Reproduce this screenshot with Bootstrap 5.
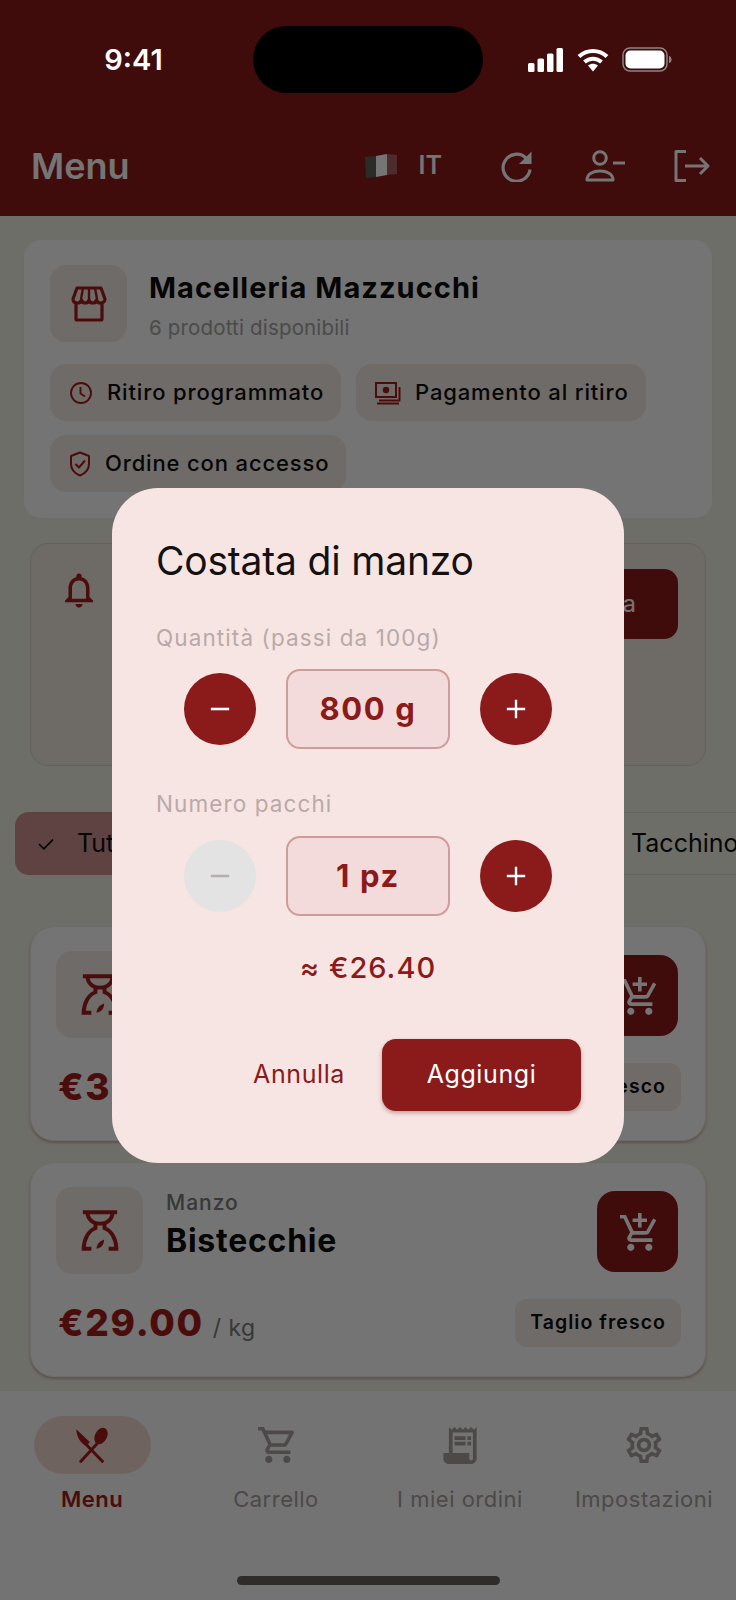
<!DOCTYPE html>
<html lang="it">
<head>
  <meta charset="UTF-8">
  <title>Menu - Macelleria Mazzucchi</title>
  <link href="https://cdn.jsdelivr.net/npm/bootstrap@5.3.0/dist/css/bootstrap.min.css" rel="stylesheet">
  <style>
    body { margin: 0; background: #000; font-family: "Inter", "Liberation Sans", sans-serif; }
    .screen { position: relative; width: 736px; height: 1600px; overflow: hidden; background: #f0efe4; color: #0d0d0d; }
    .scrim { position: absolute; inset: 0; background: rgba(0,0,0,.54); z-index: 10; }
    .accent-ink { color: #a31c1c; }

    /* top bar */
    .topbar { height: 216px; background: #8b1a1a; color: #fff; }
    .statusbar { position: relative; z-index: 11; height: 116px; padding-top: 26px; }
    .clock { width: 253px; padding-left: 14px; font-size: 29px; font-weight: 600; line-height: 67px; text-align: center; }
    .notch { width: 230px; height: 67px; background: #000; border-radius: 34px; }
    .status-icons { height: 67px; margin-left: 45px; gap: 13px; }
    .toolbar { height: 100px; padding: 0 26px 0 31px; }
    .toolbar-title { font-size: 36px; font-weight: 600; }
    .lang { font-size: 25px; font-weight: 600; gap: 22px; }
    .tool-1 { margin-left: 59px; }
    .tool-2 { margin-left: 52px; }
    .tool-3 { margin-left: 49px; }

    /* shop card */
    .panel { background: #fcfcfc; border: 1px solid #f0ece6; border-radius: 18px; }
    .shop-panel { height: 280px; margin: 23px 23px 0; padding: 25px 26px; }
    .tile { display: flex; align-items: center; justify-content: center; flex: none; background: #f1e9e2; border-radius: 16px; }
    .shop-tile { width: 77px; height: 77px; }
    .shop-text { margin-left: 22px; }
    .shop-name { font-size: 29px; font-weight: 700; line-height: 36px; margin-top: 5px; letter-spacing: 1.05px; }
    .shop-sub { font-size: 20.5px; line-height: 28px; margin-top: 8px; color: #a3a3a3; letter-spacing: .17px; }
    .info-chips { gap: 14px 15px; margin-top: 22px; }
    .info-chip { height: 57px; padding: 0 17px 0 19px; gap: 14px; background: #f1e9e2; border-radius: 16px; font-size: 22px; font-weight: 500; letter-spacing: .85px; color: #0d0d0d; }

    /* alert card */
    .alert-panel { height: 223px; margin: 24px 30px 0; padding: 25px 27px 0 27px; background: #f0e7df; border: 1px solid #ddd3cf; border-radius: 18px; }
    .alert-btn { width: 160px; height: 70px; background: #8b1a1a; border: 0; border-radius: 14px; color: #fff; font-size: 24px; text-align: right; padding-right: 42px; }

    /* filters */
    .filters { height: 63px; margin-top: 46px; padding-left: 15px; }
    .filter-chip { flex: none; height: 63px; gap: 22px; border-radius: 14px; font-size: 25px; color: #0d0d0d; }
    .filter-on { width: 300px; padding-left: 22px; background: #cf9292; }
    .filter-off { width: 170px; margin-left: 283px; padding-left: 32px; background: #f0efe4; border: 1px solid #e3d9d3; }

    /* products */
    .product { height: 215px; margin: 0 30px; padding: 24px 25px 0; border-radius: 24px; box-shadow: 0 2px 3px rgba(100,40,40,.3); }
    .product-1 { margin-top: 51px; }
    .product-2 { margin-top: 21px; }
    .product-tile { width: 87px; height: 87px; }
    .product-text { margin-left: 23px; flex: 1; }
    .product-cat { font-size: 21px; line-height: 28px; font-weight: 500; color: #7a7a7a; margin-top: 2px; letter-spacing: 1px; }
    .product-name { font-size: 32px; line-height: 40px; font-weight: 700; margin-top: 4px; letter-spacing: .75px; }
    .add-btn { display: flex; align-items: center; justify-content: center; width: 81px; height: 81px; margin: 4px 2px 0 0; padding: 0; background: #8b1a1a; border: 0; border-radius: 18px; color: #fff; }
    .price-row { margin: 25px -1px 0 2px; }
    .price { font-size: 37px; line-height: 48px; font-weight: 800; color: #a31c1c; letter-spacing: 1.7px; }
    .unit { font-size: 23px; color: #7a7a7a; margin-left: 9px; letter-spacing: .4px; }
    .tag { height: 48px; padding: 0 15px; background: #f1e9e2; border-radius: 12px; font-size: 19.5px; font-weight: 600; letter-spacing: 1.05px; }

    /* bottom nav */
    .tabbar { position: absolute; left: 0; right: 0; bottom: 0; height: 209px; background: #fafafa; padding-top: 25px; }
    .tab-item { width: 184px; color: #a89f9f; font-size: 22px; letter-spacing: .5px; }
    .tab-pill { display: flex; align-items: center; justify-content: center; width: 117px; height: 58px; border-radius: 29px; }
    .tab-on .tab-pill { background: #f1d7d1; color: #a31c1c; }
    .tab-on { color: #a31c1c; font-weight: 600; }
    .tab-label { margin-top: 11px; line-height: 28px; color: inherit; }
    .home-bar { position: absolute; left: 237px; bottom: 15px; width: 263px; height: 9px; border-radius: 5px; background: #66625c; }

    /* dialog */
    .qty-dialog { position: absolute; z-index: 11; left: 112px; top: 488px; width: 512px; height: 675px; padding: 45px 44px 0; background: #f7e5e3; border-radius: 46px; }
    .dialog-title { font-size: 39px; line-height: 56px; font-weight: 400; margin: 0; color: #151111; letter-spacing: -.2px; }
    .field-label { font-size: 22.5px; line-height: 28px; color: #b9a9a9; letter-spacing: 1.1px; }
    .label-1 { margin-top: 35px; }
    .label-2 { margin-top: 41px; }
    .stepper { padding-left: 28px; gap: 30px; }
    .stepper-1 { margin-top: 17px; }
    .stepper-2 { margin-top: 18px; }
    .step-btn { display: flex; align-items: center; justify-content: center; width: 72px; height: 72px; padding: 0; border: 0; border-radius: 50%; background: #8b1a1a; color: #fff; }
    .step-off { background: #e3e3e3; color: #b5aeae; }
    .step-value { display: flex; align-items: center; justify-content: center; width: 164px; height: 80px; background: #f3dbdb; border: 2px solid #cf9c9c; border-radius: 14px; font-size: 31px; font-weight: 700; color: #8b1a1a; letter-spacing: 1.6px; }
    .approx { margin-top: 34px; font-size: 29px; line-height: 36px; font-weight: 500; color: #8b1a1a; text-align: center; letter-spacing: 1px; }
    .dialog-actions { margin: 53px -1px 0 0; gap: 37px; }
    .cancel-link { padding: 0; border: 0; background: none; color: #8b1a1a; font-size: 25px; letter-spacing: .6px; }
    .confirm-btn { width: 199px; height: 72px; padding: 0; border: 0; border-radius: 14px; background: #8b1a1a; color: #fff; font-size: 25px; letter-spacing: .6px; box-shadow: 0 2px 4px rgba(90,20,20,.35); }
  </style>
</head>
<body>
<svg width="0" height="0" class="position-absolute">
  <defs>
    <symbol id="ic-refresh" viewBox="0 0 32 32"><path fill="none" stroke="currentColor" stroke-width="3.200" d="M25 8A13.500 13.500 0 1 0 29 19.500"/><path fill="currentColor" d="M30.500 1.500V14H18z"/></symbol>
    <symbol id="ic-user-minus" viewBox="0 0 40 32"><g fill="none" stroke="currentColor" stroke-width="3" stroke-linejoin="round"><circle cx="15" cy="8" r="6.300"/><path d="M2 30c0-6 6-9 13-9s13 3 13 9z"/></g><path fill="currentColor" d="M28 11.500h12v3H28z"/></symbol>
    <symbol id="ic-logout" viewBox="0 0 36 32"><g fill="none" stroke="currentColor" stroke-width="3" stroke-linejoin="round"><path d="M12 1.500H2v29h10"/><path d="M11 16h23M26 8l8 8-8 8"/></g></symbol>
    <symbol id="ic-store" viewBox="0 0 36 36"><g fill="none" stroke="currentColor" stroke-width="3.200" stroke-linejoin="round"><path d="M6 2h24l4 11c0 3-3 4-4.500 4-2 0-3.500-1-4-3-.5 2-2 3-3.800 3s-3.200-1-3.700-3c-.5 2-2 3-3.700 3s-3.300-1-3.800-3c-.5 2-2 3-4 3C4 17 2 16 2 13z"/><path d="M12 2l-2 11M24 2l2 11M18 2v11" stroke-width="2.400"/><path d="M5 17v16a1 1 0 0 0 1 1h24a1 1 0 0 0 1-1V17"/></g></symbol>
    <symbol id="ic-clock" viewBox="0 0 24 24"><g fill="none" stroke="currentColor" stroke-width="1.900"><circle cx="12" cy="12" r="10"/><path d="M11.500 6v6.500l4.500 3"/></g></symbol>
    <symbol id="ic-cash" viewBox="0 0 26 24"><g fill="none" stroke="currentColor" stroke-width="2"><rect x="1" y="2" width="20" height="14"/><path d="M24.500 6v13.500H4M2 22.500h22"/></g><circle cx="11" cy="9" r="3.200" fill="currentColor"/></symbol>
    <symbol id="ic-shield" viewBox="0 0 22 26"><g fill="none" stroke="currentColor" stroke-width="2" stroke-linejoin="round"><path d="M11 1.500l9 3.500v8c0 5.500-4 9.500-9 11.500-5-2-9-6-9-11.500V5z"/><path d="M6.500 13l3.500 3.500 6-7"/></g></symbol>
    <symbol id="ic-bell" viewBox="0 0 24 24"><path fill="currentColor" d="M12 22c1.100 0 2-.9 2-2h-4c0 1.100.9 2 2 2zm6-6v-5c0-3.070-1.630-5.640-4.500-6.320V4c0-.83-.67-1.500-1.500-1.500s-1.500.67-1.500 1.500v.68C7.640 5.360 6 7.920 6 11v5l-2 2v1h16v-1l-2-2zm-2 1H8v-6c0-2.480 1.510-4.500 4-4.500s4 2.020 4 4.500v6z"/></symbol>
    <symbol id="ic-check" viewBox="0 0 20 16"><path fill="none" stroke="currentColor" stroke-width="2" d="M2 8l5.500 5.500L18 3"/></symbol>
    <symbol id="ic-scale" viewBox="4 3 16 18"><g fill="none" stroke="currentColor" stroke-width="1.700"><path d="M4.500 4h15"/><path d="M6.500 4c0 3.200 2.500 5 5.500 5s5.500-1.800 5.500-5"/><path d="M10 9v2C7 12 5 15.500 4.800 20h3.400M14 9v2c3 1 5 4.500 5.200 9h-3.400"/></g><path fill="currentColor" d="M10.500 20c0-1.800 1.300-3.300 3.300-4 0 2-1 3.700-3.300 4z"/></symbol>
    <symbol id="ic-cart-add" viewBox="1 1 20 21"><path fill="currentColor" d="M11 9h2V6h3V4h-3V1h-2v3H8v2h3v3zm-4 9c-1.100 0-1.990.9-1.990 2S5.900 22 7 22s2-.9 2-2-.9-2-2-2zm10 0c-1.100 0-1.990.9-1.990 2s.89 2 1.990 2 2-.9 2-2-.9-2-2-2zm-9.830-3.250l.03-.12.9-1.630h7.450c.75 0 1.410-.41 1.750-1.030l3.860-7.010L19.420 4h-.01l-1.100 2-2.760 5H8.530l-.13-.27L6.160 6l-.95-2-.94-2H1v2h2l3.600 7.590-1.350 2.450c-.16.28-.25.61-.25.96 0 1.100.9 2 2 2h12v-2H7.420c-.13 0-.25-.11-.25-.25z"/></symbol>
    <symbol id="ic-dine" viewBox="0 0 24 24"><path fill="currentColor" d="M1.500 1.500l9 8.500-2.300 2.800C4.500 11 1.800 7 1.500 1.500z"/><ellipse cx="18" cy="6" rx="4" ry="5.800" transform="rotate(28 18 6)" fill="currentColor"/><path stroke="currentColor" stroke-width="2" d="M15.500 11L4 23.500M8 11.500l11.500 12"/></symbol>
    <symbol id="ic-cart" viewBox="1 2 20 20"><path fill="currentColor" d="M15.550 13c.75 0 1.410-.41 1.750-1.030l3.580-6.490c.37-.66-.11-1.480-.87-1.480H5.210l-.94-2H1v2h2l3.600 7.590-1.350 2.440C4.520 15.370 5.480 17 7 17h12v-2H7l1.100-2h7.450zM6.160 6h12.150l-2.760 5H8.530L6.160 6zM7 18c-1.100 0-1.990.9-1.990 2S5.900 22 7 22s2-.9 2-2-.9-2-2-2zm10 0c-1.100 0-1.990.9-1.990 2s.89 2 1.990 2 2-.9 2-2-.9-2-2-2z"/></symbol>
    <symbol id="ic-receipt" viewBox="3 2 18 20"><path fill="currentColor" d="M19.500 3.500 18 2l-1.500 1.500L15 2l-1.500 1.500L12 2l-1.500 1.500L9 2 7.500 3.500 6 2v14H3v3c0 1.660 1.340 3 3 3h12c1.660 0 3-1.340 3-3V2l-1.500 1.500zM19 19c0 .55-.45 1-1 1s-1-.45-1-1v-3H8V5h11v14z"/><path fill="currentColor" d="M9 7h6v2H9zM16 7h2v2h-2zM9 10h6v2H9zM16 10h2v2h-2z"/></symbol>
    <symbol id="ic-gear" viewBox="2 2 20 20"><path fill="currentColor" d="M19.430 12.980c.04-.32.07-.64.07-.98 0-.34-.03-.66-.07-.98l2.110-1.650c.19-.15.24-.42.12-.64l-2-3.460c-.09-.16-.26-.25-.44-.25-.06 0-.12.01-.17.03l-2.490 1c-.52-.4-1.080-.73-1.690-.98l-.38-2.650C14.460 2.180 14.250 2 14 2h-4c-.25 0-.46.18-.49.42l-.38 2.650c-.61.25-1.170.59-1.690.98l-2.490-1c-.06-.02-.12-.03-.18-.03-.17 0-.34.09-.43.25l-2 3.460c-.13.22-.07.49.12.64l2.110 1.650c-.04.32-.07.65-.07.98 0 .33.03.66.07.98l-2.110 1.650c-.19.15-.24.42-.12.64l2 3.460c.09.16.26.25.44.25.06 0 .12-.01.17-.03l2.490-1c.52.4 1.080.73 1.690.98l.38 2.650c.03.24.24.42.49.42h4c.25 0 .46-.18.49-.42l.38-2.650c.61-.25 1.170-.59 1.690-.98l2.490 1c.06.02.12.03.18.03.17 0 .34-.09.43-.25l2-3.460c.12-.22.07-.49-.12-.64l-2.110-1.650zm-1.980-1.710c.04.31.05.52.05.73 0 .21-.02.43-.05.73l-.14 1.130.89.7 1.080.84-.7 1.210-1.270-.51-1.040-.42-.9.68c-.43.32-.84.56-1.250.73l-1.060.43-.16 1.130-.2 1.350h-1.400l-.19-1.350-.16-1.130-1.060-.43c-.43-.18-.83-.41-1.230-.71l-.91-.7-1.060.43-1.270.51-.7-1.210 1.080-.84.89-.7-.14-1.130c-.03-.31-.05-.54-.05-.74s.02-.43.05-.73l.14-1.130-.89-.7-1.080-.84.7-1.210 1.270.51 1.040.42.9-.68c.43-.32.84-.56 1.250-.73l1.060-.43.16-1.130.2-1.350h1.390l.19 1.350.16 1.130 1.060.43c.43.18.83.41 1.230.71l.91.7 1.060-.43 1.270-.51.7 1.210-1.070.85-.89.7.14 1.130zM12 8c-2.210 0-4 1.790-4 4s1.790 4 4 4 4-1.790 4-4-1.790-4-4-4zm0 6c-1.100 0-2-.9-2-2s.9-2 2-2 2 .9 2 2-.9 2-2 2z"/></symbol>
    <symbol id="ic-minus" viewBox="0 0 24 24"><path fill="currentColor" d="M2 10.600h20v2.800H2z"/></symbol>
    <symbol id="ic-plus" viewBox="0 0 24 24"><path fill="currentColor" d="M2 10.700h20v2.600H2zM10.700 2h2.600v20h-2.600z"/></symbol>
  </defs>
</svg>

<div class="screen">
  <header class="topbar">
    <div class="statusbar d-flex align-items-start">
      <div class="clock">9:41</div>
      <div class="notch"></div>
      <div class="status-icons d-flex align-items-center">
        <svg width="36" height="24" viewBox="0 0 36 24" fill="#fff"><rect x="0" y="15" width="6.500" height="9" rx="1.500"/><rect x="9.500" y="10.500" width="6.500" height="13.500" rx="1.500"/><rect x="19" y="5.500" width="6.500" height="18.500" rx="1.500"/><rect x="28.500" y="0" width="6.500" height="24" rx="1.500"/></svg>
        <svg width="32" height="24" viewBox="0 0 32 24" fill="none" stroke="#fff" stroke-width="4"><path d="M2 8.500C10 1 22 1 30 8.500"/><path d="M7.500 14c5-4.500 12-4.500 17 0"/><path fill="#fff" stroke="none" d="M11 17.500c3-2.500 7-2.500 10 0L16 23.500z"/></svg>
        <svg width="50" height="25" viewBox="0 0 50 25"><rect x="1" y="1" width="44" height="23" rx="7" fill="none" stroke="#8c8585" stroke-width="1.500"/><rect x="3.500" y="3.500" width="39" height="18" rx="5" fill="#fff"/><path d="M47 9c2 .5 2.500 2 2.500 3.500S49 15.500 47 16z" fill="#8c8585"/></svg>
      </div>
    </div>
    <div class="toolbar d-flex align-items-center">
      <div class="toolbar-title">Menu</div>
      <div class="lang d-flex align-items-center ms-auto">
        <svg width="32" height="24" viewBox="0 0 32 24"><path fill="#5f5f5c" d="M0 3l11-1v21L1 24z"/><path fill="#fff" d="M11 2l11-2v21l-11 2z"/><path fill="#a8605f" d="M22 0l10 1v19l-10 1z"/></svg>
        <span>IT</span>
      </div>
      <svg class="tool-1" width="32" height="32"><use href="#ic-refresh"/></svg>
      <svg class="tool-2" width="40" height="32"><use href="#ic-user-minus"/></svg>
      <svg class="tool-3" width="36" height="32"><use href="#ic-logout"/></svg>
    </div>
  </header>

  <main>
    <section class="panel shop-panel">
      <div class="d-flex">
        <div class="tile shop-tile accent-ink"><svg width="36" height="36"><use href="#ic-store"/></svg></div>
        <div class="shop-text">
          <div class="shop-name">Macelleria Mazzucchi</div>
          <div class="shop-sub">6 prodotti disponibili</div>
        </div>
      </div>
      <div class="info-chips d-flex flex-wrap">
        <div class="info-chip d-flex align-items-center"><svg width="24" height="24" class="accent-ink"><use href="#ic-clock"/></svg>Ritiro programmato</div>
        <div class="info-chip d-flex align-items-center"><svg width="26" height="24" class="accent-ink"><use href="#ic-cash"/></svg>Pagamento al ritiro</div>
        <div class="info-chip d-flex align-items-center"><svg width="22" height="26" class="accent-ink"><use href="#ic-shield"/></svg>Ordine con accesso</div>
      </div>
    </section>

    <section class="alert-panel d-flex justify-content-between align-items-start">
      <svg width="42" height="42" class="accent-ink"><use href="#ic-bell"/></svg>
      <button type="button" class="btn alert-btn">Attiva</button>
    </section>

    <div class="filters d-flex">
      <div class="filter-chip filter-on d-flex align-items-center"><svg width="18" height="14"><use href="#ic-check"/></svg>Tutti</div>
      <div class="filter-chip filter-off d-flex align-items-center">Tacchino</div>
    </div>

    <article class="panel product product-1">
      <div class="d-flex">
        <div class="tile product-tile accent-ink"><svg width="38" height="41"><use href="#ic-scale"/></svg></div>
        <div class="product-text">
          <div class="product-cat">Manzo</div>
          <div class="product-name">Costata di manzo</div>
        </div>
        <button type="button" class="btn add-btn"><svg width="36" height="38"><use href="#ic-cart-add"/></svg></button>
      </div>
      <div class="price-row d-flex align-items-center justify-content-between">
        <div><span class="price">€33.00</span><span class="unit">/ kg</span></div>
        <div class="tag d-flex align-items-center">Taglio fresco</div>
      </div>
    </article>

    <article class="panel product product-2">
      <div class="d-flex">
        <div class="tile product-tile accent-ink"><svg width="38" height="41"><use href="#ic-scale"/></svg></div>
        <div class="product-text">
          <div class="product-cat">Manzo</div>
          <div class="product-name">Bistecchie</div>
        </div>
        <button type="button" class="btn add-btn"><svg width="36" height="38"><use href="#ic-cart-add"/></svg></button>
      </div>
      <div class="price-row d-flex align-items-center justify-content-between">
        <div><span class="price">€29.00</span><span class="unit">/ kg</span></div>
        <div class="tag d-flex align-items-center">Taglio fresco</div>
      </div>
    </article>
  </main>

  <nav class="tabbar d-flex">
    <div class="tab-item tab-on d-flex flex-column align-items-center"><div class="tab-pill"><svg width="36" height="36"><use href="#ic-dine"/></svg></div><div class="tab-label">Menu</div></div>
    <div class="tab-item d-flex flex-column align-items-center"><div class="tab-pill"><svg width="36" height="36"><use href="#ic-cart"/></svg></div><div class="tab-label">Carrello</div></div>
    <div class="tab-item d-flex flex-column align-items-center"><div class="tab-pill"><svg width="34" height="37"><use href="#ic-receipt"/></svg></div><div class="tab-label">I miei ordini</div></div>
    <div class="tab-item d-flex flex-column align-items-center"><div class="tab-pill"><svg width="36" height="36"><use href="#ic-gear"/></svg></div><div class="tab-label">Impostazioni</div></div>
    <div class="home-bar"></div>
  </nav>

  <div class="scrim"></div>

  <div class="qty-dialog" role="dialog">
    <h2 class="dialog-title">Costata di manzo</h2>
    <div class="field-label label-1">Quantità (passi da 100g)</div>
    <div class="stepper stepper-1 d-flex align-items-center">
      <button type="button" class="btn step-btn"><svg width="22" height="22"><use href="#ic-minus"/></svg></button>
      <div class="step-value">800 g</div>
      <button type="button" class="btn step-btn"><svg width="22" height="22"><use href="#ic-plus"/></svg></button>
    </div>
    <div class="field-label label-2">Numero pacchi</div>
    <div class="stepper stepper-2 d-flex align-items-center">
      <button type="button" class="btn step-btn step-off"><svg width="22" height="22"><use href="#ic-minus"/></svg></button>
      <div class="step-value">1 pz</div>
      <button type="button" class="btn step-btn"><svg width="22" height="22"><use href="#ic-plus"/></svg></button>
    </div>
    <div class="approx">≈ €26.40</div>
    <div class="dialog-actions d-flex align-items-center justify-content-end">
      <button type="button" class="btn cancel-link">Annulla</button>
      <button type="button" class="btn confirm-btn">Aggiungi</button>
    </div>
  </div>
</div>
<script src="https://cdn.jsdelivr.net/npm/bootstrap@5.3.0/dist/js/bootstrap.bundle.min.js"></script>
</body>
</html>
